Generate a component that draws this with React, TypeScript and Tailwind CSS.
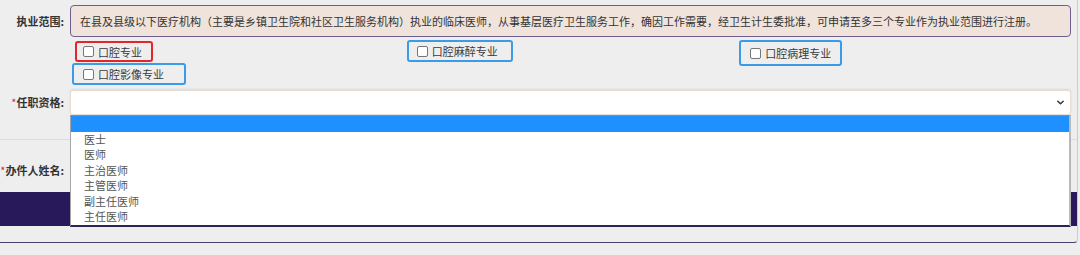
import React from 'react'

const desc =
  '在县及县级以下医疗机构（主要是乡镇卫生院和社区卫生服务机构）执业的临床医师，从事基层医疗卫生服务工作，确因工作需要，经卫生计生委批准，可申请至多三个专业作为执业范围进行注册。'

const options = ['医士', '医师', '主治医师', '主管医师', '副主任医师', '主任医师']

// 专业勾选项（外框为截图上的标注框）
const majors = [
  { label: '口腔专业', box: 'ml-[5px] mt-[1px] w-[78px] h-[21px] border-[#e3262b] pl-[6px]' },
  { label: '口腔麻醉专业', box: 'ml-[3px] mt-0 w-[106px] h-[22px] border-[#3b9be6] pl-[8px]' },
  { label: '口腔病理专业', box: 'ml-[2px] mt-0 w-[103px] h-[26px] border-[#3b9be6] pl-[9px]' },
  { label: '口腔影像专业', box: 'ml-[2px] mt-0 w-[114px] h-[22px] border-[#3b9be6] pl-[9px]' },
]

const Label = ({ text, required }: { text: string; required?: boolean }) => (
  <div className="w-[70px] shrink-0 flex justify-end pr-[6px] whitespace-nowrap text-[11px] font-bold text-[#333] leading-[16px]">
    {required && <span className="text-[#c0392b] font-normal">*</span>}
    {text}:
  </div>
)

const CheckItem = ({ label, box }: { label: string; box: string }) => (
  <label className={`flex items-center gap-[4px] border-2 rounded-[3px] self-start ${box}`}>
    <span className="w-[11px] h-[11px] border border-[#767676] rounded-[2px] bg-white shrink-0" />
    <span className="text-[11px] text-[#3a3a3a] leading-[14px] whitespace-nowrap">{label}</span>
  </label>
)

export default function App() {
  return (
    <div className="min-h-[255px] bg-[#eeeeee] font-['Noto_Sans_CJK_SC','Noto_Sans',sans-serif]">
      <div className="w-[1078px] border-r border-b border-r-[#cdc8da] border-b-[#4b4173] rounded-br-[4px] pb-[16px]">
        {/* 执业范围 */}
        <div className="flex items-start pt-[5px]">
          <div className="pt-[8px]">
            <Label text="执业范围" />
          </div>
          <div className="w-[1001px] h-[32px] flex items-center pl-[9px] bg-[#efe3dc] border border-[#6e5f8e] rounded-[4px] text-[11px] text-[#333] whitespace-nowrap overflow-hidden">
            {desc}
          </div>
        </div>

        <div className="ml-[70px] w-[1001px] grid grid-cols-3 auto-rows-[23px] mt-[3px]">
          {majors.map((m) => (
            <CheckItem key={m.label} label={m.label} box={m.box} />
          ))}
        </div>

        {/* 任职资格 */}
        <div className="flex items-start h-[54px] pt-[4px] border-b border-[#dcdcdc]">
          <div className="pt-[4px]">
            <Label text="任职资格" required />
          </div>
          <div className="relative w-[1001px]">
            <div className="h-[25px] bg-white border border-[#e8ddd5] rounded-[3px] shadow-[0_-1px_2px_rgba(120,170,220,0.25)] flex items-center justify-end pr-[5px]">
              <svg width="9" height="9" viewBox="0 0 10 10" fill="none">
                <path d="M2 3.5 L5 6.5 L8 3.5" stroke="#333" strokeWidth="1.6" strokeLinecap="round" strokeLinejoin="round" />
              </svg>
            </div>
            <div className="absolute left-0 top-full w-full z-10 bg-white border-t border-t-[#8c8c8c] border-l border-l-[#a5a5a5] border-r-2 border-r-[#b8b8b8] border-b-2 border-b-[#2d2354]">
              <div className="h-[15.5px] bg-[#1e90ff]" />
              {options.map((o) => (
                <div key={o} className="h-[15.5px] leading-[15.5px] pl-[13px] text-[11px] text-[#555]">
                  {o}
                </div>
              ))}
            </div>
          </div>
        </div>

        {/* 办件人姓名 */}
        <div className="flex items-start h-[52px] pt-[22px]">
          <Label text="办件人姓名" required />
        </div>

        <div className="h-[34px] bg-[#27195a]" />
      </div>
    </div>
  )
}
